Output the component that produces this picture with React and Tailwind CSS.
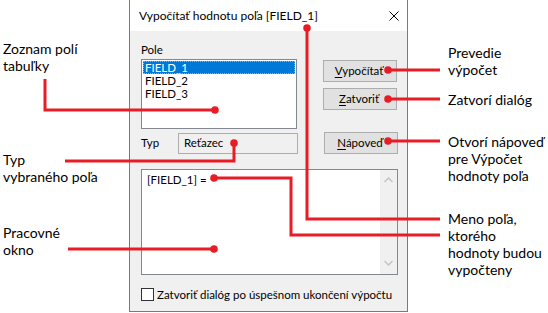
import React from 'react';

const RED = '#e81c24';

// callout lines drawn over the page
const Callouts = () => (
  <svg className="absolute left-0 top-0 pointer-events-none" width="548" height="313" viewBox="0 0 548 313">
    <g fill="none" stroke={RED} strokeWidth="3" strokeLinejoin="miter">
      <polyline points="45,79 45,110 215,110" />
      <polyline points="65,161 234,161 234,143" />
      <polyline points="68,249 214,249" />
      <polyline points="388,70 440,70" />
      <polyline points="388,99 440,99" />
      <polyline points="388,141 440,141" />
      <polyline points="307,28 307,219 440,219" />
      <polyline points="214,178 291,178 291,235 440,235" />
    </g>
    <g fill={RED}>
      <circle cx="215" cy="110" r="3.8" />
      <circle cx="234" cy="143" r="3.8" />
      <circle cx="214" cy="249" r="3.8" />
      <circle cx="388" cy="70" r="3.8" />
      <circle cx="388" cy="99" r="3.8" />
      <circle cx="388" cy="141" r="3.8" />
      <circle cx="307" cy="28" r="3.8" />
      <circle cx="214" cy="178" r="3.8" />
    </g>
  </svg>
);

const Label = ({ className = '', children }) => (
  <div className={`absolute whitespace-nowrap text-[14px] leading-[17px] text-black ${className}`}>{children}</div>
);

const Button = ({ hotkey, rest, className = '' }) => (
  <div className={`w-[74px] h-[22px] bg-[#e1e1e1] border border-[#adadad] flex items-center justify-center text-[11.5px] text-black ${className}`}>
    <span className="-ml-[2px]"><span className="underline underline-offset-2">{hotkey}</span>{rest}</span>
  </div>
);

export default function App() {
  return (
    <div className="relative w-[548px] h-[313px] bg-white overflow-hidden font-['Lato',sans-serif]">
      {/* dialog */}
      <div className="ml-[129px] w-[279px] h-[312px] border-x border-b border-[#7a7a7a] flex flex-col">
        <div className="h-[31px] bg-white flex items-center justify-between pl-[9px] pr-[8px]">
          <span className="text-[12px] text-black">Vypočítať hodnotu poľa [FIELD_1]</span>
          <svg width="10" height="10" viewBox="0 0 10 10">
            <path d="M0.5 0.5 L9.5 9.5 M9.5 0.5 L0.5 9.5" stroke="#000" strokeWidth="1" />
          </svg>
        </div>

        <div className="flex-1 bg-[#f0f0f0] pl-[11px] pt-[10px] text-[11.5px] text-black">
          <div className="flex">
            <div className="w-[156px]">
              <div className="h-[16px] leading-[16px] pt-[1px]">Pole</div>
              <div className="mt-[2px] h-[70px] bg-white border border-[#828790] p-[1px]">
                <div className="h-[13px] leading-[13px] pl-[2px] bg-[#0078d7] text-white outline outline-1 outline-dotted outline-[#e8a050] -outline-offset-1">FIELD_1</div>
                <div className="h-[13px] leading-[13px] pl-[2px]">FIELD_2</div>
                <div className="h-[13px] leading-[13px] pl-[2px]">FIELD_3</div>
              </div>
            </div>
            <div className="ml-[26px] mt-[19px] flex flex-col gap-[6px]">
              <Button hotkey="V" rest="ypočítať" />
              <Button hotkey="Z" rest="atvoriť" />
            </div>
          </div>

          <div className="mt-[3px] flex items-center">
            <div className="w-[37px]">Typ</div>
            <div className="w-[120px] h-[21px] border border-[#adadad] bg-[#f0f0f0] flex items-center pl-[5px]">Reťazec</div>
            <Button hotkey="N" rest="ápoveď" className="ml-[26px] h-[21px]" />
          </div>

          <div className="mt-[15px] w-[257px] h-[106px] bg-white border border-[#828790] flex">
            <div className="flex-1 pl-[5px] pt-[2px] leading-[16px]">[FIELD_1] =</div>
            <div className="w-[17px] bg-[#f0f0f0] flex flex-col items-center justify-between pt-[7px] pb-[8px]">
              <svg width="9" height="6" viewBox="0 0 9 6">
                <path d="M0.5 5 L4.5 1 L8.5 5" fill="none" stroke="#c4c4c4" strokeWidth="1.5" />
              </svg>
              <svg width="9" height="6" viewBox="0 0 9 6">
                <path d="M0.5 1 L4.5 5 L8.5 1" fill="none" stroke="#c4c4c4" strokeWidth="1.5" />
              </svg>
            </div>
          </div>

          <div className="mt-[13px] flex items-center">
            <div className="w-[13px] h-[13px] bg-white border border-[#333333]" />
            <span className="ml-[3px] leading-[13px] whitespace-nowrap">Zatvoriť dialóg po úspešnom ukončení výpočtu</span>
          </div>
        </div>
      </div>

      <Callouts />

      <Label className="left-[3px] top-[40px]">Zoznam polí<br />tabuľky</Label>
      <Label className="left-[3px] top-[151px]">Typ<br />vybraného poľa</Label>
      <Label className="left-[3px] top-[224px]">Pracovné<br />okno</Label>
      <Label className="left-[448px] top-[44px]">Prevedie<br />výpočet</Label>
      <Label className="left-[448px] top-[91px]">Zatvorí dialóg</Label>
      <Label className="left-[448px] top-[133px]">Otvorí nápoveď<br />pre Výpočet<br />hodnoty poľa</Label>
      <Label className="left-[448px] top-[210px]">Meno poľa,<br />ktorého<br />hodnoty budou<br />vypočteny</Label>
    </div>
  );
}
